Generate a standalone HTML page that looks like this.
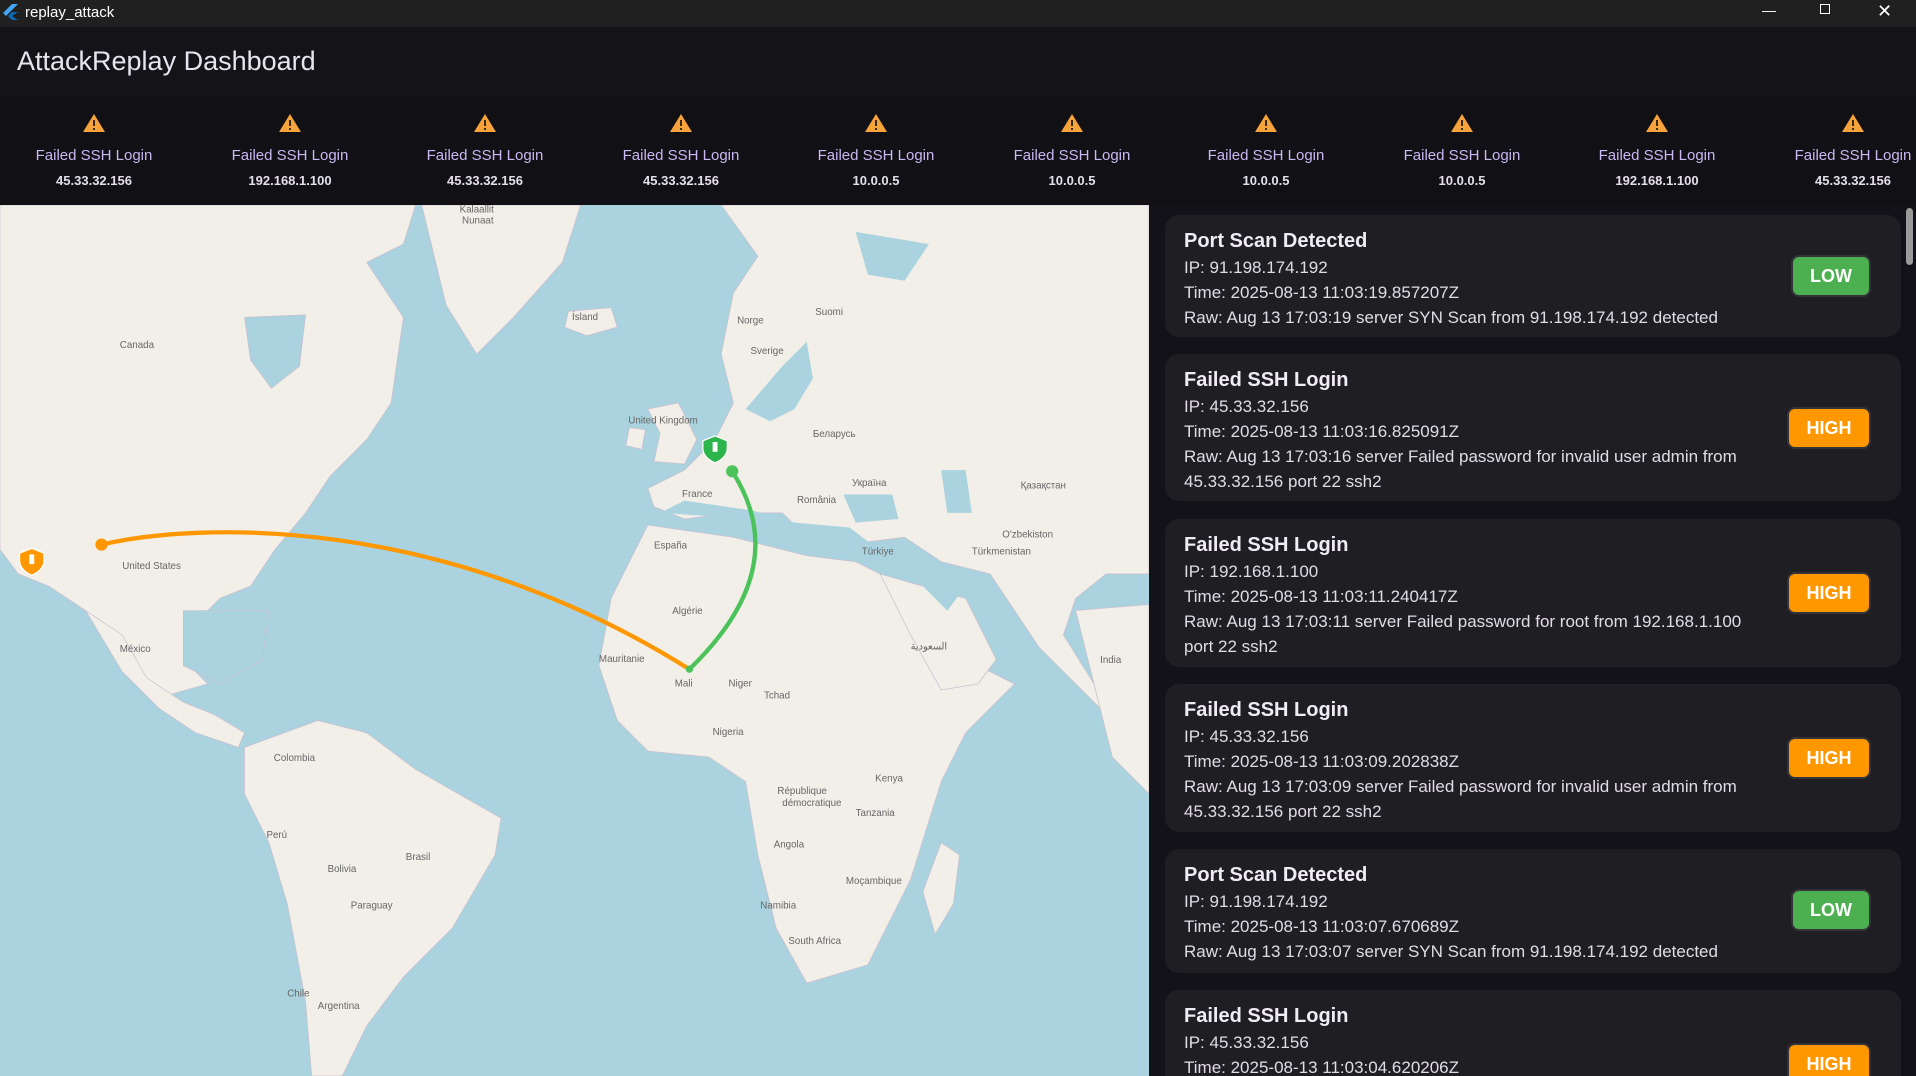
<!DOCTYPE html>
<html><head><meta charset="utf-8"><style>
*{margin:0;padding:0;box-sizing:border-box}
body{width:1916px;height:1076px;overflow:hidden;background:#131218;font-family:"Liberation Sans",sans-serif;position:relative}
.tb{position:absolute;left:0;top:0;width:1916px;height:27px;background:#202020;color:#fff;font-size:15px}
.tb .t{position:absolute;left:25px;top:4px}
.hd{position:absolute;left:0;top:27px;width:1916px;height:70px;background:#141318}
.hd h1{position:absolute;left:17px;top:19px;font-weight:normal;font-size:27px;color:#e8e4ee}
.strip{position:absolute;left:0;top:97px;width:1916px;height:108px;background:#111015}
.al{position:absolute;top:16px;width:180px;text-align:center}
.al .n{color:#c9b8f2;font-size:15px;margin-top:9px}
.al .ip{color:#e4e0e8;font-size:13px;font-weight:bold;margin-top:9px}
.map{position:absolute;left:0;top:205px;width:1149px;height:871px;background:#aad3df;overflow:hidden}
.rp{position:absolute;left:1149px;top:205px;width:767px;height:871px;background:#131218;overflow:hidden}
.card{position:absolute;left:16px;width:736px;background:#1f1e23;border-radius:14px;color:#e0dce4;font-size:17px;padding:14px 0 0 19px;line-height:25px;overflow:hidden}
.card b{font-size:20px;display:block;color:#f0ecf4;margin-bottom:1px}
.bd{position:absolute;right:30px;color:#fff;font-weight:bold;font-size:18px;text-align:center;border-radius:8px;border:2px solid #35333a;height:42px;line-height:38px}
.low{background:#4caf50;width:80px}
.high{background:#ff9800;width:84px}
.sb{position:absolute;left:1906px;top:208px;width:7px;height:57px;background:#9a9a9a;border-radius:4px}
</style></head><body>
<div class="tb"><svg style="position:absolute;left:3px;top:4px" width="16" height="18" viewBox="0 0 16 18"><path d="M9 0L0 9l3 3L15 0z" fill="#42a5f5"/><path d="M9 8L5 12l4 4h6l-6-4 6-4z" fill="#0d6ab8"/></svg><span class="t">replay_attack</span>
<span style="position:absolute;left:1762px;top:2px;font-size:14px">&#8212;</span>
<span style="position:absolute;left:1820px;top:4px;width:10px;height:10px;border:1px solid #fff"></span>
<span style="position:absolute;left:1877px;top:1px;font-size:18px">&#10005;</span></div>
<div class="hd"><h1>AttackReplay Dashboard</h1></div>
<div class="strip">
<div class="al" style="left:4px"><svg width="24" height="20" viewBox="0 0 24 20"><path d="M12 1L23 19H1z" fill="#f5a33a"/><rect x="11" y="7" width="2" height="6" fill="#3a2a10"/><rect x="11" y="15" width="2" height="2" fill="#3a2a10"/></svg><div class="n">Failed SSH Login</div><div class="ip">45.33.32.156</div></div>
<div class="al" style="left:200px"><svg width="24" height="20" viewBox="0 0 24 20"><path d="M12 1L23 19H1z" fill="#f5a33a"/><rect x="11" y="7" width="2" height="6" fill="#3a2a10"/><rect x="11" y="15" width="2" height="2" fill="#3a2a10"/></svg><div class="n">Failed SSH Login</div><div class="ip">192.168.1.100</div></div>
<div class="al" style="left:395px"><svg width="24" height="20" viewBox="0 0 24 20"><path d="M12 1L23 19H1z" fill="#f5a33a"/><rect x="11" y="7" width="2" height="6" fill="#3a2a10"/><rect x="11" y="15" width="2" height="2" fill="#3a2a10"/></svg><div class="n">Failed SSH Login</div><div class="ip">45.33.32.156</div></div>
<div class="al" style="left:591px"><svg width="24" height="20" viewBox="0 0 24 20"><path d="M12 1L23 19H1z" fill="#f5a33a"/><rect x="11" y="7" width="2" height="6" fill="#3a2a10"/><rect x="11" y="15" width="2" height="2" fill="#3a2a10"/></svg><div class="n">Failed SSH Login</div><div class="ip">45.33.32.156</div></div>
<div class="al" style="left:786px"><svg width="24" height="20" viewBox="0 0 24 20"><path d="M12 1L23 19H1z" fill="#f5a33a"/><rect x="11" y="7" width="2" height="6" fill="#3a2a10"/><rect x="11" y="15" width="2" height="2" fill="#3a2a10"/></svg><div class="n">Failed SSH Login</div><div class="ip">10.0.0.5</div></div>
<div class="al" style="left:982px"><svg width="24" height="20" viewBox="0 0 24 20"><path d="M12 1L23 19H1z" fill="#f5a33a"/><rect x="11" y="7" width="2" height="6" fill="#3a2a10"/><rect x="11" y="15" width="2" height="2" fill="#3a2a10"/></svg><div class="n">Failed SSH Login</div><div class="ip">10.0.0.5</div></div>
<div class="al" style="left:1176px"><svg width="24" height="20" viewBox="0 0 24 20"><path d="M12 1L23 19H1z" fill="#f5a33a"/><rect x="11" y="7" width="2" height="6" fill="#3a2a10"/><rect x="11" y="15" width="2" height="2" fill="#3a2a10"/></svg><div class="n">Failed SSH Login</div><div class="ip">10.0.0.5</div></div>
<div class="al" style="left:1372px"><svg width="24" height="20" viewBox="0 0 24 20"><path d="M12 1L23 19H1z" fill="#f5a33a"/><rect x="11" y="7" width="2" height="6" fill="#3a2a10"/><rect x="11" y="15" width="2" height="2" fill="#3a2a10"/></svg><div class="n">Failed SSH Login</div><div class="ip">10.0.0.5</div></div>
<div class="al" style="left:1567px"><svg width="24" height="20" viewBox="0 0 24 20"><path d="M12 1L23 19H1z" fill="#f5a33a"/><rect x="11" y="7" width="2" height="6" fill="#3a2a10"/><rect x="11" y="15" width="2" height="2" fill="#3a2a10"/></svg><div class="n">Failed SSH Login</div><div class="ip">192.168.1.100</div></div>
<div class="al" style="left:1763px"><svg width="24" height="20" viewBox="0 0 24 20"><path d="M12 1L23 19H1z" fill="#f5a33a"/><rect x="11" y="7" width="2" height="6" fill="#3a2a10"/><rect x="11" y="15" width="2" height="2" fill="#3a2a10"/></svg><div class="n">Failed SSH Login</div><div class="ip">45.33.32.156</div></div>
</div>
<div class="map"><svg width="1149" height="871" viewBox="0 168 940 713" preserveAspectRatio="none">
<g fill="#f2efe9" stroke="#c9bfcf" stroke-width="0.6">
<path d="M0,168L340,168L330,200L300,215L330,260L320,330L300,360L270,390L250,420L225,450L205,480L180,490L160,510L150,540L170,560L135,570L110,545L90,520L70,500L40,480L15,470L0,450Z"/>
<path d="M200,260L250,258L245,300L222,318L205,295Z" fill="#aad3df"/>
<path d="M70,500L100,550L130,580L160,600L195,612L200,600L175,585L150,575L120,555L100,520Z"/>
<path d="M150,500L220,500L215,540L180,560L150,545Z" fill="#aad3df"/>
<path d="M200,612L260,590L300,600L340,630L410,670L405,700L370,760L330,800L300,840L280,881L255,881L250,820L235,740L220,690L200,650Z"/>
<path d="M345,168L475,168L460,215L420,260L390,290L365,250Z"/>
<path d="M465,255L500,252L505,268L480,275L462,268Z"/>
<path d="M530,335L555,330L570,360L560,380L535,378L540,355Z"/>
<path d="M515,350L528,352L525,368L512,365Z"/>
<path d="M590,168L940,168L940,470L905,470L880,490L870,520L895,560L900,580L880,560L850,530L830,500L810,470L770,460L740,440L700,445L660,440L640,420L600,420L560,425L535,415L530,400L560,385L585,360L600,330L590,290L600,240L620,210Z"/>
<path d="M530,430L600,440L660,455L700,460L740,480L770,530L830,560L790,600L770,640L745,720L710,790L660,805L635,760L620,700L610,640L580,620L530,615L505,590L490,545L500,490Z"/>
<path d="M720,470L790,490L815,540L800,560L770,565L745,520Z"/>
<path d="M880,500L940,495L940,650L910,620L900,580Z"/>
<path d="M770,690L785,700L780,740L765,765L755,730Z"/>
</g>
<g fill="#aad3df">
<path d="M540,420L600,424L640,440L700,452L712,445L695,432L650,428L615,418L560,410Z"/>
<path d="M690,405L730,405L735,425L700,428Z M770,385L790,385L795,420L775,420Z"/>
<path d="M610,335L640,300L660,280L665,310L650,335L630,345Z"/>
<path d="M700,190L760,200L740,230L710,225Z"/>
<path d="M760,465L790,480L775,500L755,480Z"/>
</g>
<g font-size="8" fill="#666" font-family="Liberation Sans">
<text x="98" y="285">Canada</text><text x="100" y="466">United States</text><text x="98" y="534">México</text>
<text x="468" y="262">Ísland</text><text x="514" y="347">United Kingdom</text><text x="558" y="407">France</text><text x="535" y="449">España</text>
<text x="603" y="265">Norge</text><text x="614" y="290">Sverige</text><text x="665" y="358">Беларусь</text><text x="652" y="412">România</text>
<text x="697" y="398">Україна</text><text x="705" y="454">Türkiye</text><text x="835" y="400">Қазақстан</text><text x="820" y="440">O'zbekiston</text>
<text x="795" y="454">Türkmenistan</text><text x="550" y="503">Algérie</text><text x="490" y="542">Mauritanie</text><text x="552" y="562">Mali</text>
<text x="596" y="562">Niger</text><text x="625" y="572">Tchad</text><text x="583" y="602">Nigeria</text><text x="716" y="640">Kenya</text>
<text x="700" y="668">Tanzania</text><text x="633" y="694">Angola</text><text x="622" y="744">Namibia</text><text x="645" y="773">South Africa</text>
<text x="692" y="724">Moçambique</text><text x="900" y="543">India</text><text x="224" y="623">Colombia</text><text x="218" y="686">Perú</text>
<text x="268" y="714">Bolivia</text><text x="332" y="704">Brasil</text><text x="287" y="744">Paraguay</text><text x="260" y="826">Argentina</text>
<text x="235" y="816">Chile</text><text x="376" y="174">Kalaallit</text><text x="378" y="183">Nunaat</text><text x="667" y="258">Suomi</text>
<text x="745" y="532">السعودية</text><text x="636" y="650">République</text><text x="640" y="660">démocratique</text>
</g>
<path d="M83,446 C160,428 360,420 564,548" fill="none" stroke="#ff9800" stroke-width="3.5"/>
<path d="M599,386 Q650,465 564,548" fill="none" stroke="#4cc35a" stroke-width="3.5"/>
<circle cx="83" cy="446" r="5" fill="#ff9800"/><circle cx="599" cy="386" r="5" fill="#4cc35a"/><circle cx="564" cy="548" r="3" fill="#4cc35a"/>
<path d="M585,357l10,4v6c0,6-5,10-10,12c-5-2-10-6-10-12v-6z" fill="#2cb54a" stroke="#fff" stroke-width="1"/>
<path d="M26,449l10,4v6c0,6-5,10-10,12c-5-2-10-6-10-12v-6z" fill="#ff9800" stroke="#fff" stroke-width="1"/>
<rect x="583" y="362" width="4" height="8" fill="#fff"/><rect x="24" y="454" width="4" height="8" fill="#fff"/>
</svg></div>
<div class="rp">
<div class="card" style="top:10px;height:122px"><b>Port Scan Detected</b>IP: 91.198.174.192<br>Time: 2025-08-13 11:03:19.857207Z<br>Raw: Aug 13 17:03:19 server SYN Scan from 91.198.174.192 detected<div class="bd low" style="top:40px">LOW</div></div>
<div class="card" style="top:149px;height:147px"><b>Failed SSH Login</b>IP: 45.33.32.156<br>Time: 2025-08-13 11:03:16.825091Z<br>Raw: Aug 13 17:03:16 server Failed password for invalid user admin from<br>45.33.32.156 port 22 ssh2<div class="bd high" style="top:53px">HIGH</div></div>
<div class="card" style="top:314px;height:148px"><b>Failed SSH Login</b>IP: 192.168.1.100<br>Time: 2025-08-13 11:03:11.240417Z<br>Raw: Aug 13 17:03:11 server Failed password for root from 192.168.1.100<br>port 22 ssh2<div class="bd high" style="top:53px">HIGH</div></div>
<div class="card" style="top:479px;height:148px"><b>Failed SSH Login</b>IP: 45.33.32.156<br>Time: 2025-08-13 11:03:09.202838Z<br>Raw: Aug 13 17:03:09 server Failed password for invalid user admin from<br>45.33.32.156 port 22 ssh2<div class="bd high" style="top:53px">HIGH</div></div>
<div class="card" style="top:644px;height:124px"><b>Port Scan Detected</b>IP: 91.198.174.192<br>Time: 2025-08-13 11:03:07.670689Z<br>Raw: Aug 13 17:03:07 server SYN Scan from 91.198.174.192 detected<div class="bd low" style="top:40px">LOW</div></div>
<div class="card" style="top:785px;height:148px"><b>Failed SSH Login</b>IP: 45.33.32.156<br>Time: 2025-08-13 11:03:04.620206Z<div class="bd high" style="top:53px">HIGH</div></div>
</div>
<div class="sb"></div>
</body></html>
